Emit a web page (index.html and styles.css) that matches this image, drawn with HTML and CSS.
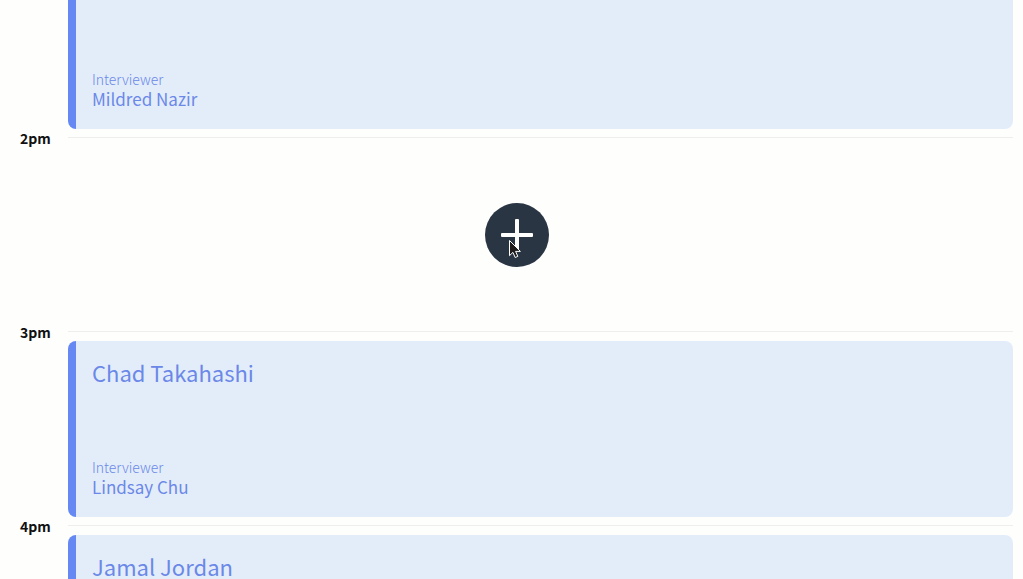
FILE: index.html
```
<!DOCTYPE html>
<html lang="en">
<head>
<meta charset="utf-8">
<meta name="viewport" content="width=device-width, initial-scale=1">
<title>Interview schedule</title>
<link rel="stylesheet" href="styles.css">
</head>
<body>
<main class="schedule">
  <section class="slot slot--continued">
    <article class="card">
      <div class="interviewer">
        <span class="caption">Interviewer</span>
        <span class="person">Mildred Nazir</span>
      </div>
    </article>
  </section>
  <section class="slot">
    <time class="hour">2pm</time>
    <div class="empty">
      <button class="add" type="button" aria-label="Add appointment">
        <svg class="plus" viewBox="0 0 32 32" aria-hidden="true"><path d="M14 1q0-1 1-1h2q1 0 1 1v13h13q1 0 1 1v2q0 1-1 1H18v13q0 1-1 1h-2q-1 0-1-1V18H1q-1 0-1-1v-2q0-1 1-1h13z"/></svg>
      </button>
      <svg class="pointer" viewBox="0 0 14 20" aria-hidden="true"><path d="M1.5 1.5v15.2l3.4-3.3 2.3 5.1 2.6-1.1-2.2-5h4.8z"/></svg>
    </div>
  </section>
  <section class="slot">
    <time class="hour">3pm</time>
    <article class="card">
      <h2 class="student">Chad Takahashi</h2>
      <div class="interviewer">
        <span class="caption">Interviewer</span>
        <span class="person">Lindsay Chu</span>
      </div>
    </article>
  </section>
  <section class="slot">
    <time class="hour">4pm</time>
    <article class="card">
      <h2 class="student">Jamal Jordan</h2>
    </article>
  </section>
</main>
</body>
</html>
```
FILE: styles.css
```
* { box-sizing: border-box; }

body {
  margin: 0;
  background: #fefefd;
  color: #111;
  font-family: "Noto Sans CJK JP", "Noto Sans CJK SC", "Open Sans", sans-serif;
}

.schedule {
  height: 100vh;
  overflow: hidden;
  padding-right: 10px;
}

.slot {
  display: grid;
  grid-template-columns: 48px minmax(0, 1fr);
  padding-left: 20px;
}

.hour {
  height: 24px;
  margin-top: -11px;
  font-size: 14px;
  font-weight: 700;
  line-height: 24px;
}

.card,
.empty {
  grid-column: 2;
}

.slot:not(.slot--continued) {
  background: linear-gradient(#eee, #eee) 68px 0 / 100% 1px no-repeat;
}

.card {
  display: flex;
  flex-direction: column;
  justify-content: space-between;
  min-height: 176px;
  margin: 10px 0 8px;
  padding: 15px 16px 20px;
  border-left: 8px solid #6688f2;
  border-radius: 8px;
  background: #e3edfa;
  color: #6b88e8;
}

.slot--continued .card {
  justify-content: flex-end;
  min-height: 129px;
  margin-top: 0;
  border-top-left-radius: 0;
  border-top-right-radius: 0;
}

.student {
  margin: 0;
  font-size: 22px;
  font-weight: 400;
  line-height: 32px;
}

.interviewer {
  display: flex;
  flex-direction: column;
}

.caption {
  font-size: 14px;
  font-weight: 300;
  line-height: 20px;
}

.person {
  font-size: 17px;
  line-height: 20px;
}

.empty {
  position: relative;
  display: flex;
  align-items: center;
  justify-content: center;
  height: 194px;
  padding: 2px 48px 0 0;
}

.add {
  display: grid;
  place-items: center;
  width: 64px;
  height: 64px;
  padding: 0;
  border: 0;
  border-radius: 50%;
  background: #293543;
  cursor: pointer;
}

.plus {
  width: 32px;
  height: 32px;
  fill: #fff;
}

.pointer {
  position: absolute;
  top: 102px;
  left: calc(50% - 33px);
  width: 14px;
  height: 20px;
  fill: #201c1c;
  stroke: #fff;
  pointer-events: none;
}
```
